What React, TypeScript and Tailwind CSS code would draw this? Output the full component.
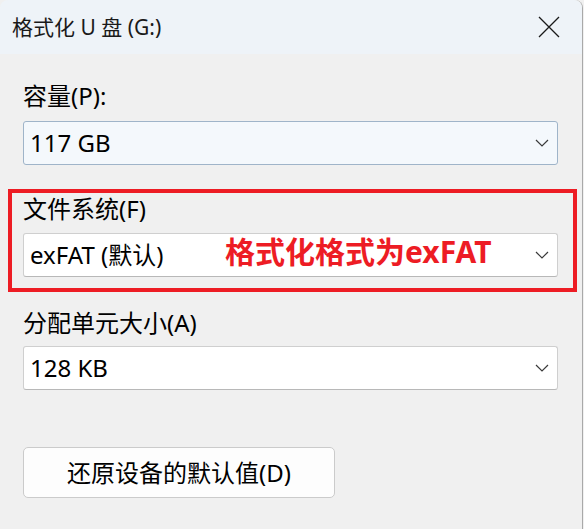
import React from "react";

const Chevron = () => (
  <svg width="14" height="8" viewBox="0 0 14 8" fill="none" className="shrink-0">
    <path d="M1 1L7 7L13 1" stroke="#3a3a3a" strokeWidth="1.2" />
  </svg>
);

type SelectProps = {
  value: string;
  tone?: "focus" | "plain";
  className?: string;
  children?: React.ReactNode;
};

const Select = ({ value, tone = "plain", className = "mt-2", children }: SelectProps) => (
  <div
    className={
      (tone === "focus"
        ? "relative flex h-[44px] w-[535px] items-center justify-between rounded-[3px] border border-[#9fb4c9] bg-[#f4f8fc] pl-[6px] pr-[8px] "
        : "relative flex h-[44px] w-[535px] items-center justify-between rounded-[3px] border border-[#cfcfcf] border-b-[#b8b8b8] bg-white pl-[6px] pr-[8px] ") +
      className
    }
  >
    <span className="text-[24px] leading-none text-black">{value}</span>
    {children}
    <Chevron />
  </div>
);

export default function App() {
  return (
    <div
      className="h-[529px] w-[584px] overflow-hidden bg-[#f0f0f0]"
      style={{ fontFamily: '"Noto Sans", "Noto Sans CJK SC", sans-serif' }}
    >
      <div className="h-full w-[583px] border-r border-[#a9a9a9] rounded-t-lg">
        {/* Title bar */}
        <div className="flex h-[54px] items-center justify-between rounded-t-lg bg-[#eef3f8] pl-[12px] pr-[22px]">
          <span className="text-[21px] leading-none text-[#1a1a1a]">格式化 U 盘 (G:)</span>
          <svg width="22" height="22" viewBox="0 0 22 22" fill="none">
            <path d="M1 1L21 21M21 1L1 21" stroke="#1a1a1a" strokeWidth="1.3" />
          </svg>
        </div>

        <div className="px-[23px]">
          <div className="mt-[26px] text-[24px] leading-[32px] text-black">容量(P):</div>
          <Select value="117 GB" tone="focus" className="mt-[9px]" />

          {/* Red annotation box */}
          <div className="-mx-[15px] mt-[24px] w-[569px] border-4 border-[#ed1c24] px-[11px] pb-[11px]">
            <div className="text-[24px] leading-[32px] text-black">文件系统(F)</div>
            <Select value="exFAT (默认)">
              <span className="absolute left-[201px] top-[-2px] text-[30px] font-bold leading-[40px] text-[#ed1c24]">
                格式化格式为exFAT
              </span>
            </Select>
          </div>

          <div className="mt-[15px] text-[24px] leading-[32px] text-black">分配单元大小(A)</div>
          <Select value="128 KB" className="mt-[7px]" />

          <button
            type="button"
            className="mt-[57px] flex h-[51px] w-[312px] items-center justify-center rounded-[5px] border border-[#cbcbcb] bg-[#fdfdfd] text-[24px] leading-none text-black"
          >
            还原设备的默认值(D)
          </button>
        </div>
      </div>
    </div>
  );
}
